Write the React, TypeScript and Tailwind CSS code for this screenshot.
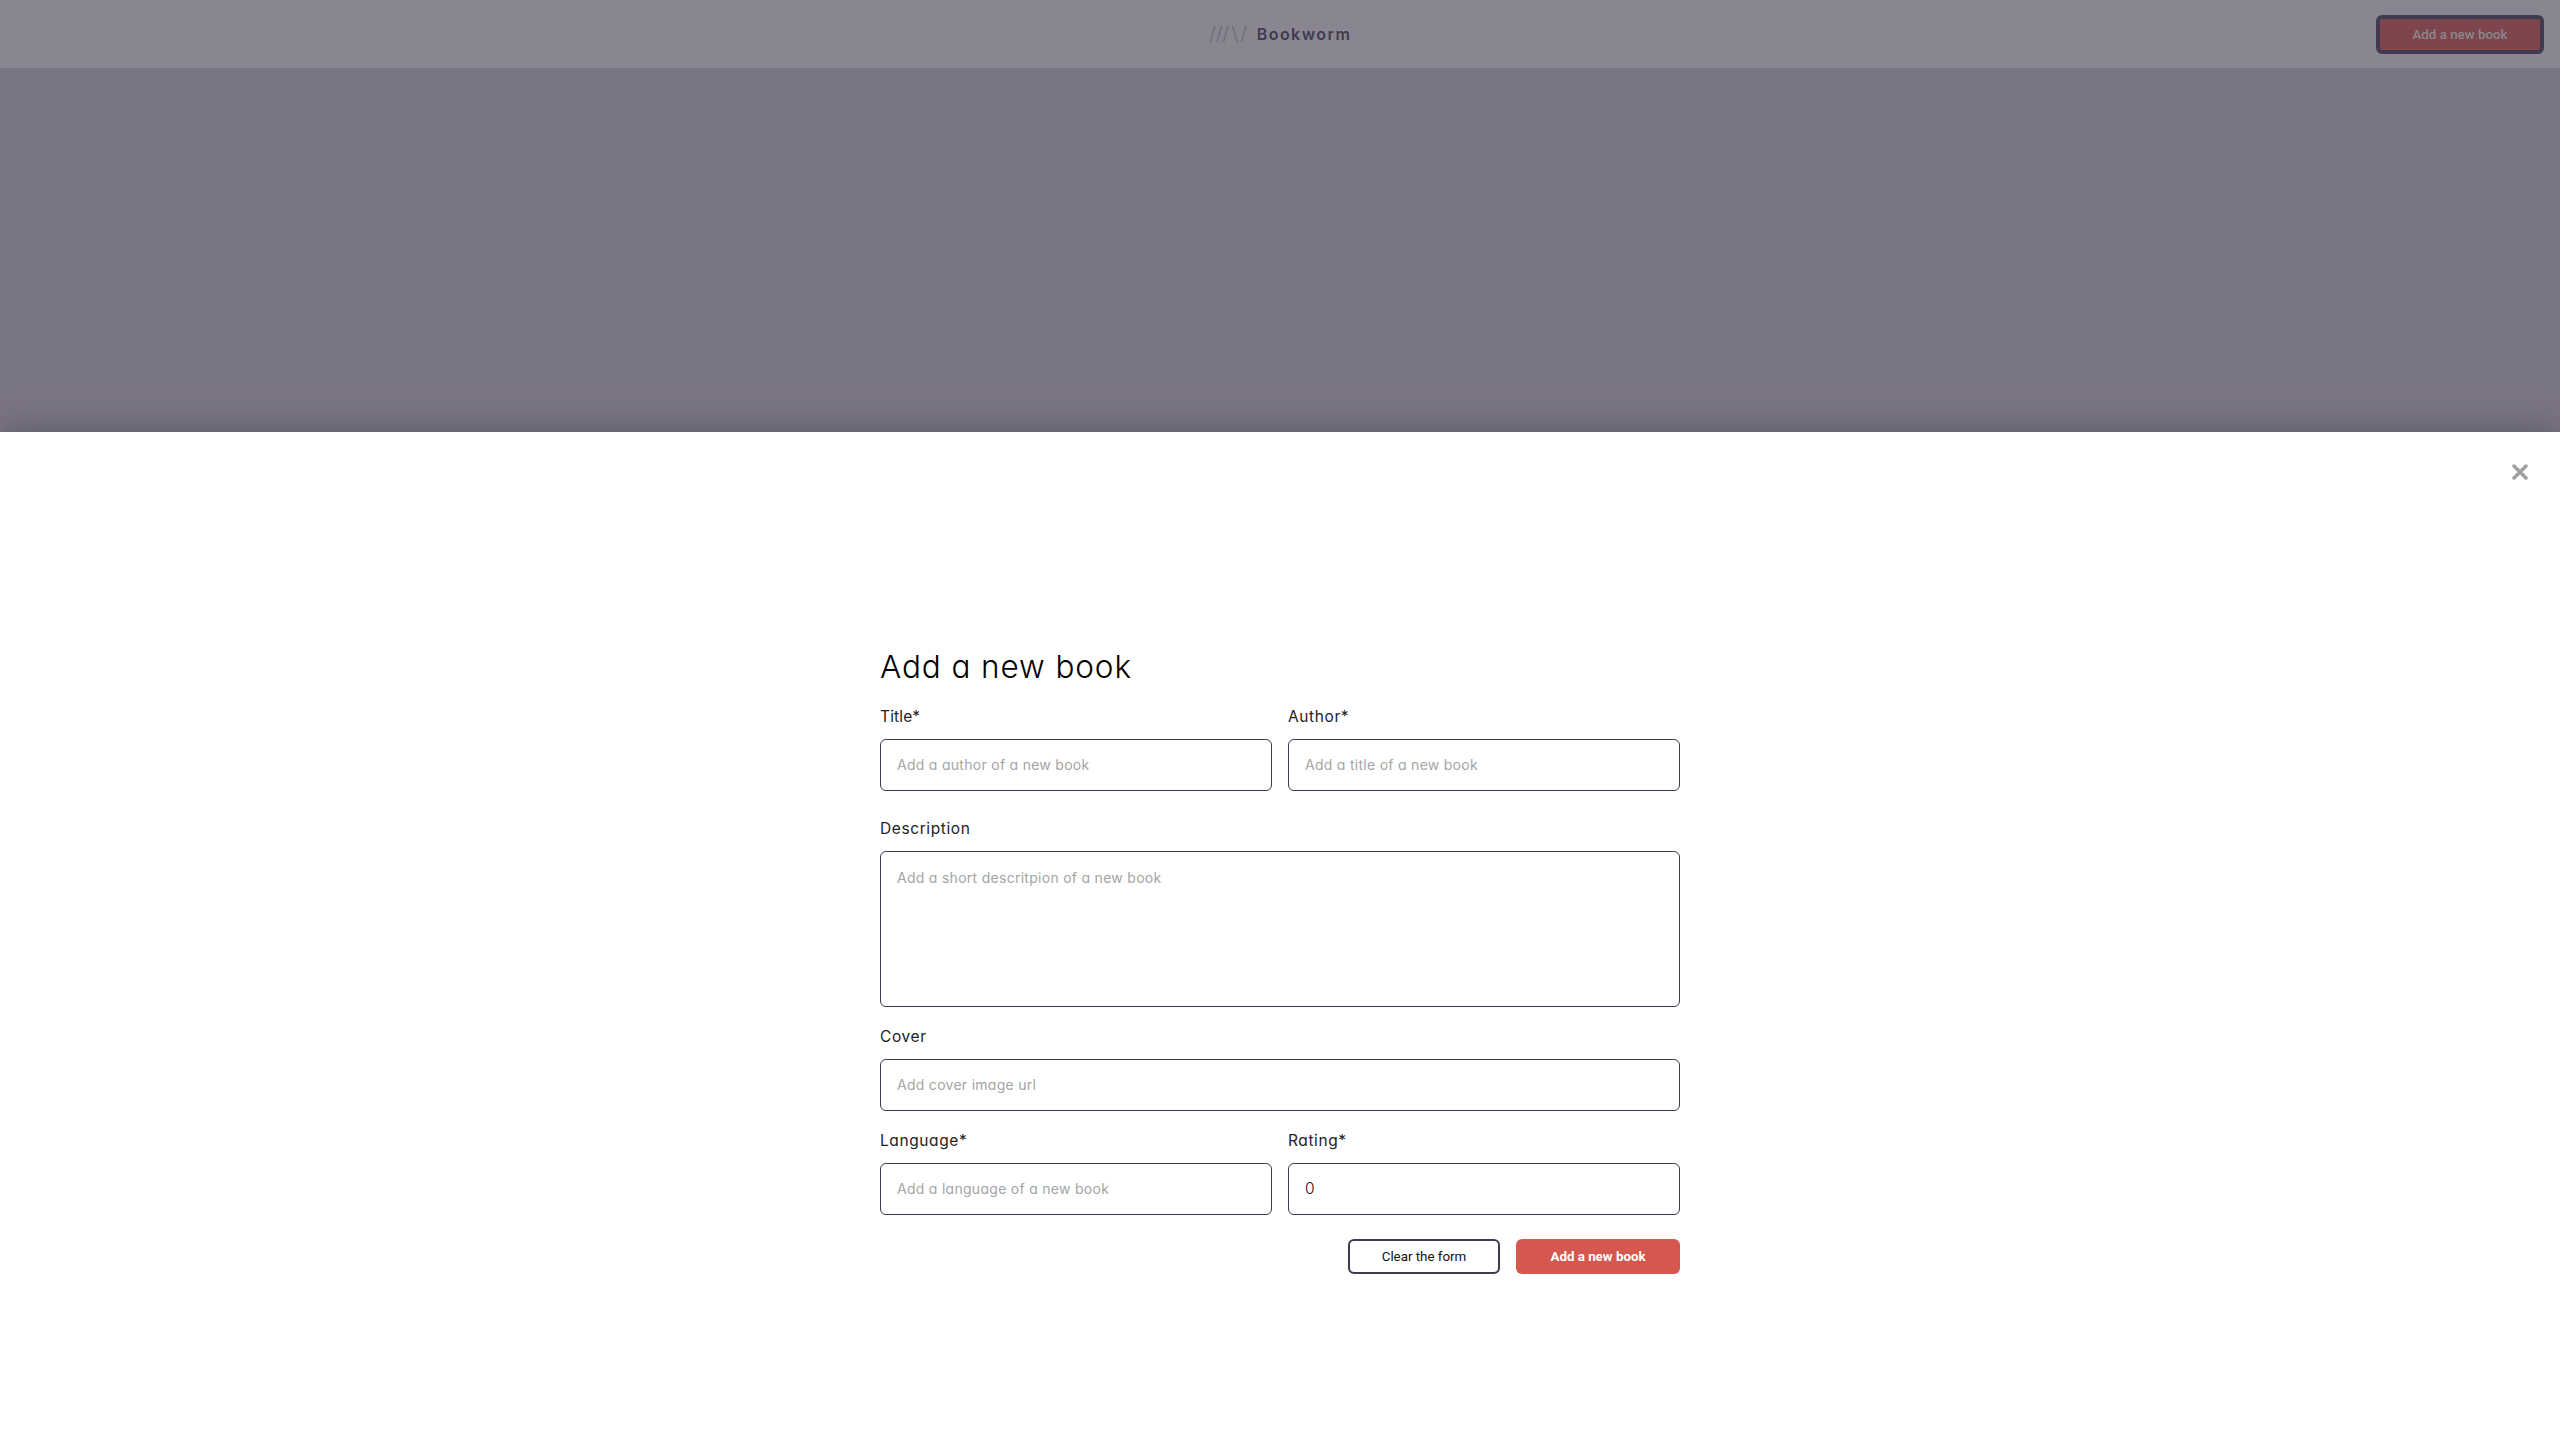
import { useState } from "react";

const display = "font-['Inter',sans-serif] [font-feature-settings:'cv11']";
const box =
  "block w-full rounded-[6px] border border-[#3d394f] bg-white px-4 pb-px text-[15.5px] font-light text-[#111] outline-none placeholder:text-[14px] placeholder:font-normal placeholder:tracking-[0.28px] placeholder:text-[#a4a4a4] placeholder:opacity-100";
const label = "block h-6 text-[15.5px] leading-[25px] font-normal text-[#222]";

function Logo() {
  return (
    <div className="flex items-center gap-[9px]">
      <svg width="39" height="18" viewBox="0 0 39 18" fill="none" stroke="#777280" strokeWidth="2">
        <path d="M1.500 17 6 1M8 17 12.500 1M14.500 17 19 1M23.500 1 28.500 17M32.500 17 37 1" />
      </svg>
      <span className="text-base leading-6 font-semibold tracking-[1.45px] text-[#403b50]">Bookworm</span>
    </div>
  );
}

export default function App() {
  const [rating, setRating] = useState("0");
  return (
    <div className={`flex h-[1440px] w-full flex-col overflow-hidden bg-[#7b7683] ${display}`}>
      <header className="grid h-[68px] shrink-0 grid-cols-3 items-center bg-[#8a8691] px-4">
        <div />
        <div className="flex justify-center">
          <Logo />
        </div>
        <button className="h-[39px] w-[168px] justify-self-end rounded-[6px] border-4 border-[#403b50] bg-[#7e464c] pt-px font-['Roboto',sans-serif] text-[13.333px] font-medium text-[#8a8691]">
          Add a new book
        </button>
      </header>
      <div className="h-[364px] shrink-0" />
      <section className="flex flex-1 flex-col bg-white shadow-[0_0_36px_#3d39538c]">
        <div className="flex h-20 justify-end px-8 pt-8">
          <button aria-label="Close" className="size-4">
            <svg width="16" height="16" viewBox="0 0 16 16" stroke="#a0a0a0" strokeWidth="3.5" strokeLinecap="round">
              <path d="M2 2l12 12M14 2 2 14" />
            </svg>
          </button>
        </div>
        <form className="mx-auto mt-[130px] flex w-[800px] flex-col" onSubmit={(e) => e.preventDefault()}>
          <h1 className="h-12 text-[31.5px] leading-[49px] font-light tracking-[0.9px] text-black">Add a new book</h1>
          <div className="mt-[14px] grid grid-cols-2 gap-4">
            <label>
              <span className={`${label} tracking-[0.15px]`}>Title*</span>
              <input className={`${box} mt-[11px] h-[52px]`} placeholder="Add a author of a new book" />
            </label>
            <label>
              <span className={`${label} tracking-[0.6px]`}>Author*</span>
              <input className={`${box} mt-[11px] h-[52px]`} placeholder="Add a title of a new book" />
            </label>
          </div>
          <label className="mt-[25px]">
            <span className={`${label} tracking-[0.6px]`}>Description</span>
            <textarea className={`${box} mt-[11px] h-[156px] resize-none pt-[15px] leading-[21px]`} placeholder="Add a short descritpion of a new book" />
          </label>
          <label className="mt-[17px]">
            <span className={`${label} tracking-[0.6px]`}>Cover</span>
            <input className={`${box} mt-[11px] h-[52px]`} placeholder="Add cover image url" />
          </label>
          <div className="mt-[17px] grid grid-cols-2 gap-4">
            <label>
              <span className={`${label} tracking-[0.6px]`}>Language*</span>
              <input className={`${box} mt-[11px] h-[52px]`} placeholder="Add a language of a new book" />
            </label>
            <label>
              <span className={`${label} tracking-[0.6px]`}>Rating*</span>
              <input className={`${box} mt-[11px] h-[52px]`} value={rating} onChange={(e) => setRating(e.target.value)} />
            </label>
          </div>
          <div className="mt-6 flex justify-end gap-4 font-['Roboto',sans-serif] text-[13.333px]">
            <button type="reset" className="h-[35px] w-[152px] rounded-[6px] border-2 border-[#3d394f] bg-white text-[#111]">
              Clear the form
            </button>
            <button className="h-[35px] w-[164px] rounded-[6px] bg-[#d6574d] font-bold text-white">Add a new book</button>
          </div>
        </form>
      </section>
    </div>
  );
}
